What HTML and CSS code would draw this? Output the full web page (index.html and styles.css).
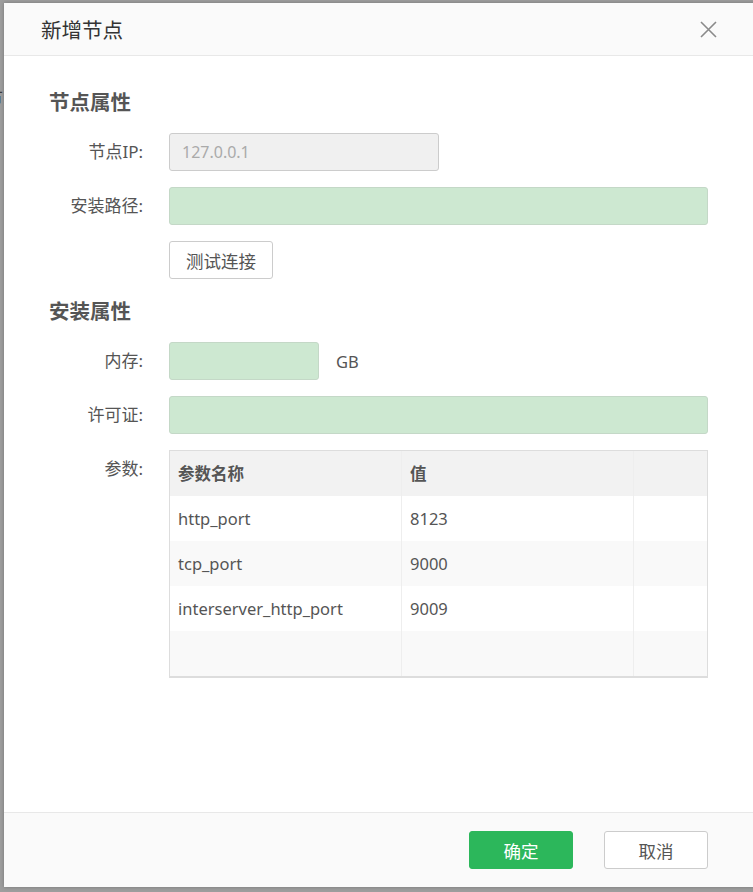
FILE: index.html
```html
<!DOCTYPE html>
<html lang="zh">
<head>
<meta charset="utf-8">
<title>新增节点</title>
<link rel="stylesheet" href="styles.css">
</head>
<body>
<div class="backdrop-text">节</div>
<div class="dialog">
  <div class="dialog-header">
    <span class="dialog-title">新增节点</span>
    <svg class="close" width="17" height="17" viewBox="0 0 17 17"><path d="M1 1 L16 16 M16 1 L1 16" stroke="#8a8a8a" stroke-width="1.6" fill="none"/></svg>
  </div>
  <div class="dialog-body">
    <h3 class="section-title">节点属性</h3>
    <div class="form">
      <label class="label">节点IP:</label>
      <div class="field"><div class="input input-disabled input-mid">127.0.0.1</div></div>
      <label class="label">安装路径:</label>
      <div class="field"><div class="input input-green"></div></div>
      <span></span>
      <div class="field"><button class="btn">测试连接</button></div>
    </div>
    <h3 class="section-title section-2">安装属性</h3>
    <div class="form">
      <label class="label">内存:</label>
      <div class="field"><div class="input input-green input-small"></div><span class="unit">GB</span></div>
      <label class="label">许可证:</label>
      <div class="field"><div class="input input-green"></div></div>
      <label class="label label-top">参数:</label>
      <div class="field">
        <div class="table">
          <div class="tr th"><div class="td">参数名称</div><div class="td">值</div><div class="td"></div></div>
          <div class="tr"><div class="td">http_port</div><div class="td">8123</div><div class="td"></div></div>
          <div class="tr alt"><div class="td">tcp_port</div><div class="td">9000</div><div class="td"></div></div>
          <div class="tr"><div class="td">interserver_http_port</div><div class="td">9009</div><div class="td"></div></div>
          <div class="tr alt"><div class="td"></div><div class="td"></div><div class="td"></div></div>
        </div>
      </div>
    </div>
  </div>
  <div class="dialog-footer">
    <button class="btn btn-primary">确定</button>
    <button class="btn btn-footer">取消</button>
  </div>
</div>
</body>
</html>
```
FILE: styles.css
```css
html, body {
  margin: 0;
  padding: 0;
  height: 100%;
  overflow: hidden;
}
body {
  background: #9e9e9e;
  font-family: "Noto Sans", "Noto Sans CJK SC", sans-serif;
  color: #555;
  position: relative;
}
.backdrop-text {
  position: absolute;
  left: -15px;
  top: 84px;
  font-size: 18px;
  color: #3c3c3c;
}
.dialog {
  position: absolute;
  left: 4px;
  top: 3px;
  width: 760px;
  height: 884px;
  background: #fff;
  box-shadow: 0 0 4px rgba(0,0,0,0.25);
  display: flex;
  flex-direction: column;
}
.dialog-header {
  height: 52px;
  background: #fafafa;
  border-bottom: 1px solid #e8e8e8;
  display: flex;
  align-items: center;
  padding-left: 37px;
  padding-right: 47px;
  flex-shrink: 0;
}
.dialog-title {
  font-size: 20.5px;
  color: #333;
  flex: 1;
}
.close {
  margin-top: 1px;
}
.dialog-body {
  flex: 1;
  padding: 32px 56px 0 45px;
}
.section-title {
  margin: 0;
  font-size: 20.5px;
  line-height: 28px;
  font-weight: bold;
  color: #555;
}
.section-2 {
  margin-top: 18px;
}
.form {
  margin-top: 17px;
  display: grid;
  grid-template-columns: 94px 1fr;
  column-gap: 26px;
  row-gap: 16px;
}
.label {
  font-size: 17px;
  line-height: 38px;
  height: 38px;
  text-align: right;
  color: #555;
}
.field {
  display: flex;
  align-items: center;
  min-height: 38px;
}
.input {
  box-sizing: border-box;
  height: 38px;
  flex: 1;
  border: 1px solid #ccc;
  border-radius: 3px;
  padding: 0 12px;
  font-size: 16px;
  line-height: 36px;
}
.input-disabled {
  background: #f0f0f0;
  color: #aaa;
}
.input-mid {
  flex: 0 0 270px;
}
.input-small {
  flex: 0 0 150px;
}
.input-green {
  background: #cde8d1;
  border-color: #c4d8c7;
}
.unit {
  margin-left: 17px;
  font-size: 16.5px;
  color: #555;
}
.btn {
  box-sizing: border-box;
  height: 38px;
  width: 104px;
  border: 1px solid #ccc;
  border-radius: 3px;
  background: #fff;
  font-family: inherit;
  font-size: 17.5px;
  color: #555;
  padding: 0;
}
.table {
  flex: 1;
  border: 1px solid #ddd;
  border-bottom-width: 2px;
}
.tr {
  display: grid;
  grid-template-columns: 232px 232px 1fr;
  height: 45px;
  background: #fff;
}
.tr.alt {
  background: #f9f9f9;
}
.tr.th {
  background: #f2f2f2;
  font-weight: bold;
}
.td {
  padding-left: 8px;
  font-size: 16.5px;
  line-height: 45px;
  color: #555;
  border-right: 1px solid #eee;
  white-space: nowrap;
}
.td:last-child {
  border-right: none;
}
.dialog-footer {
  height: 75px;
  background: #fafafa;
  border-top: 1px solid #e8e8e8;
  display: flex;
  justify-content: flex-end;
  align-items: flex-start;
  gap: 31px;
  padding: 18px 56px 0 0;
  box-sizing: border-box;
  flex-shrink: 0;
}
.btn-primary {
  background: #2cb75b;
  border-color: #2cb75b;
  color: #fff;
}
```
